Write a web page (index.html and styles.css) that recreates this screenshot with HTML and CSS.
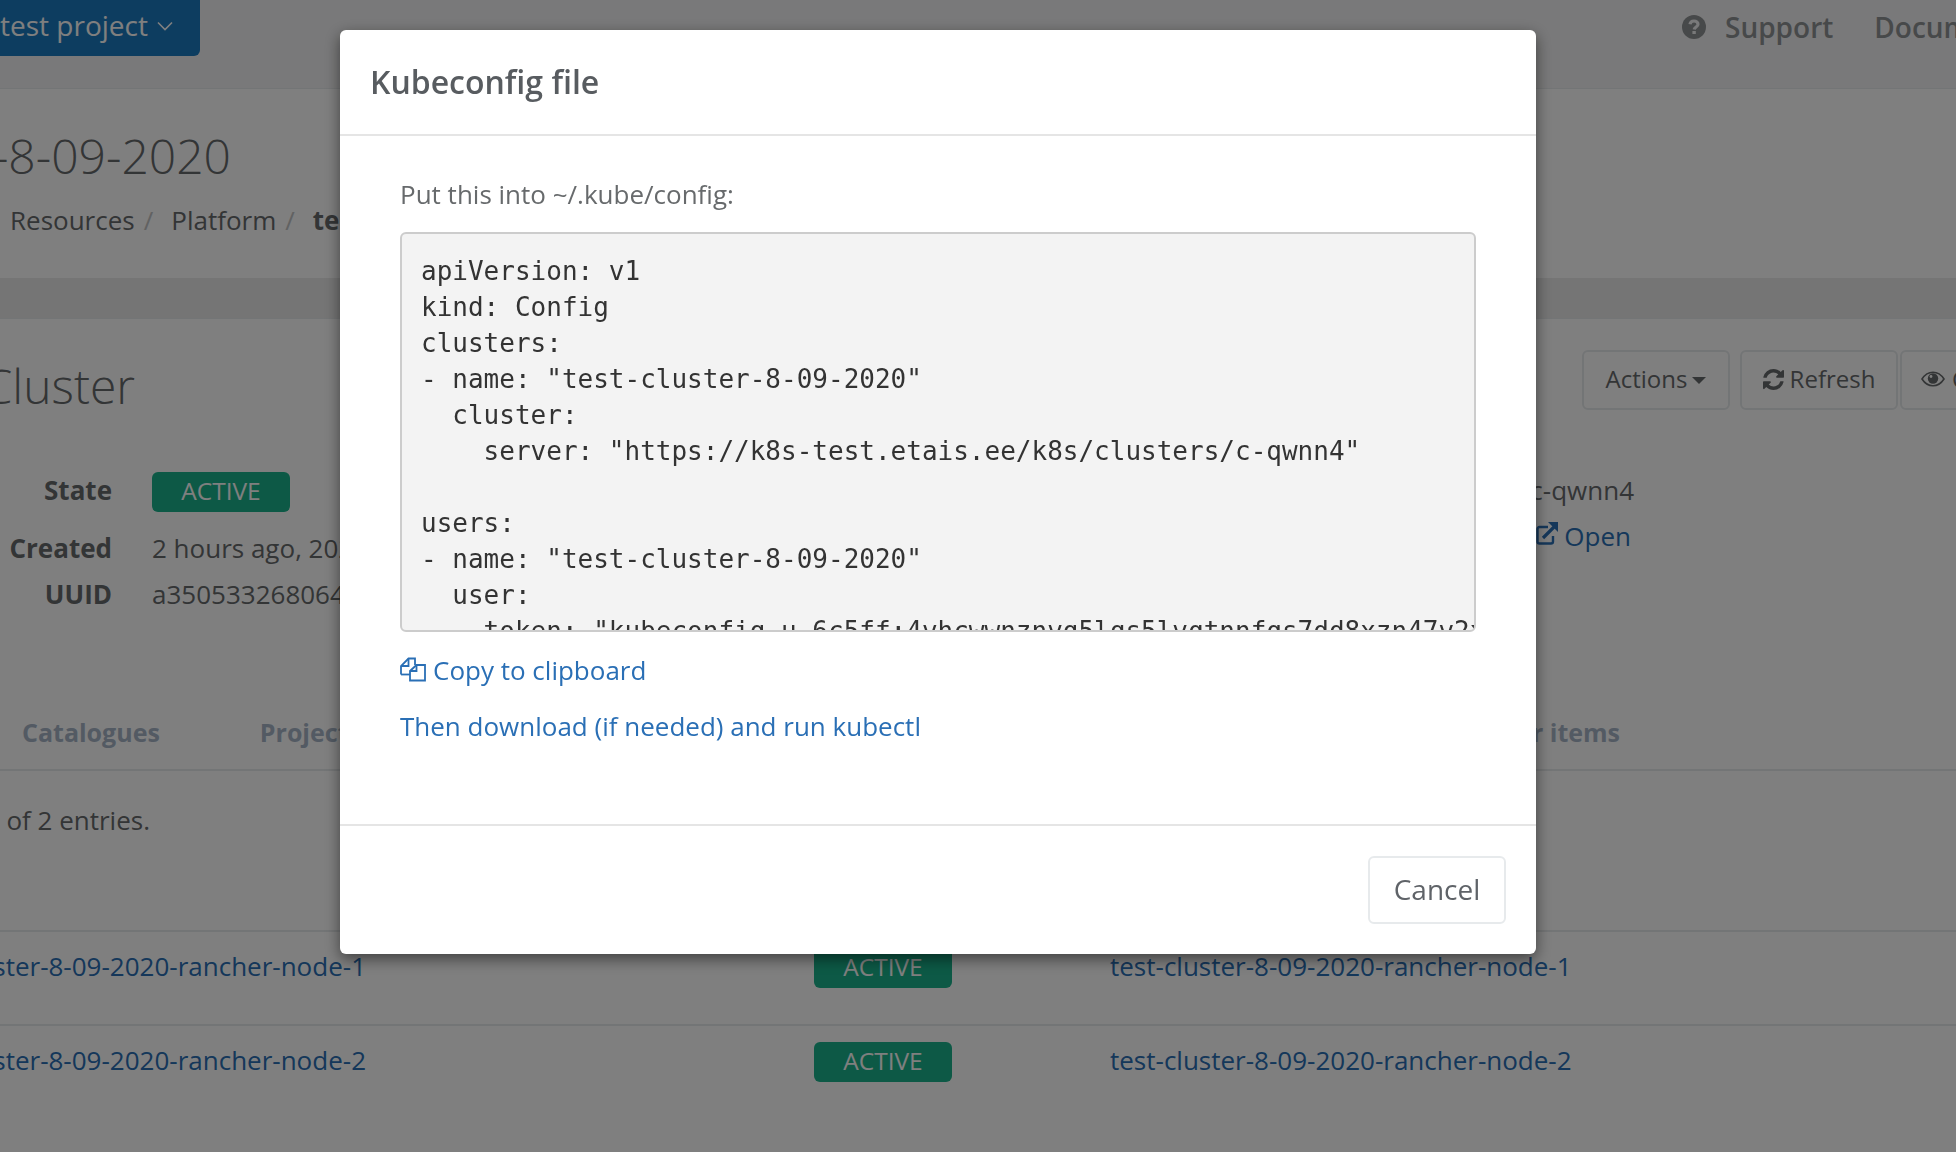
FILE: index.html
```html
<!DOCTYPE html>
<html lang="en">
<head>
<meta charset="utf-8">
<title>Kubeconfig file</title>
<link rel="stylesheet" href="styles.css">
</head>
<body>
<div class="page">
  <header class="topbar">
    <div class="project-btn"><span>test project</span>
      <svg class="chevron" viewBox="0 0 16 10"><path d="M1 1.500l7 7 7-7"/></svg>
    </div>
    <nav class="topnav">
      <svg class="help-icon" viewBox="0 0 24 24"><circle cx="12" cy="12" r="12"/><path class="help-mark" d="M8 9.300c.3-2.200 1.900-3.300 4-3.300 2.300 0 4 1.300 4 3.300 0 2.700-3.500 2.600-3.800 5.200"/><rect class="help-dot" x="10.400" y="16" width="3.400" height="3"/></svg>
      <a class="topnav-link">Support</a>
      <a class="topnav-link">Documentation</a>
    </nav>
  </header>
  <section class="title-panel">
    <h1 class="cut page-title"><span>test-cluster-8-09-2020</span></h1>
    <div class="cut crumbs-wrap">
      <ol class="crumbs">
        <li>Resources</li><li class="sep">/</li><li>Platform</li><li class="sep">/</li><li class="strong">test-cluster-8-09-2020</li>
      </ol>
    </div>
  </section>
  <div class="band"></div>
  <main class="card">
    <div class="card-head">
      <h2 class="cut card-title"><span>Cluster</span></h2>
      <div class="actions">
        <button class="btn btn-actions">Actions<i class="caret"></i></button>
        <button class="btn btn-refresh">
          <svg class="refresh-icon" viewBox="0 0 1536 1536"><path d="M1511 928q0 5-1 7-64 268-268 434.500t-478 166.500q-146 0-282.500-55t-243.500-157l-129 129q-19 19-45 19t-45-19-19-45v-448q0-26 19-45t45-19h448q26 0 45 19t19 45-19 45l-137 137q71 66 161 102t187 36q134 0 250-65t186-179q11-17 53-117 8-23 30-23h192q13 0 22.500 9.500t9.500 22.500zm25-800v448q0 26-19 45t-45 19h-448q-26 0-45-19t-19-45 19-45l138-138q-148-137-349-137-134 0-250 65t-186 179q-11 17-53 117-8 23-30 23h-199q-13 0-22.500-9.500t-9.500-22.500v-7q65-268 270-434.500t480-166.500q146 0 284 55.500t245 156.500l130-129q19-19 45-19t45 19 19 45z"/></svg>Refresh</button>
        <button class="btn btn-open">
          <svg class="eye-icon" viewBox="0 0 24 16"><path class="eye-line" d="M1 8c2.800-4.400 6.500-6.800 11-6.800S20.200 3.600 23 8c-2.800 4.400-6.500 6.800-11 6.800S3.800 12.400 1 8z"/><circle cx="12" cy="7.500" r="5.200"/><circle class="eye-glint" cx="10" cy="5.500" r="1.400"/></svg>Console</button>
      </div>
    </div>
    <div class="details">
      <dl class="facts">
        <dt>State</dt><dd><span class="badge">ACTIVE</span></dd>
        <dt>Created</dt><dd>2 hours ago, 2020-09-08 11:23</dd>
        <dt>UUID</dt><dd>a350533268064b72a2d1c9fe</dd>
      </dl>
      <div class="facts-right">
        <div>c-qwnn4</div>
        <a class="open-link">
          <svg class="ext-icon" viewBox="0 0 22 24"><path d="M12 6H3.500A2 2 0 0 0 1.500 8v12.500a2 2 0 0 0 2 2H15a2 2 0 0 0 2-2V15"/><path class="ext-shaft" d="M7 17L18 6"/><path class="ext-head" d="M12 1h10v10z"/></svg>Open</a>
      </div>
    </div>
    <div class="tabs">
      <span class="tab">Catalogues</span>
      <span class="tab">Projects</span>
      <span class="tab tab-end">Order items</span>
    </div>
    <div class="cut entries"><span>Showing 1 to 2 of 2 entries.</span></div>
    <div class="table">
      <div class="table-row">
        <div class="cut node-name"><a>test-cluster-8-09-2020-rancher-node-1</a></div>
        <span class="badge badge-cell">ACTIVE</span>
        <a class="node-link">test-cluster-8-09-2020-rancher-node-1</a>
      </div>
      <div class="table-row">
        <div class="cut node-name"><a>test-cluster-8-09-2020-rancher-node-2</a></div>
        <span class="badge badge-cell">ACTIVE</span>
        <a class="node-link">test-cluster-8-09-2020-rancher-node-2</a>
      </div>
    </div>
  </main>
</div>
<div class="overlay"></div>
<div class="modal">
  <div class="modal-head"><h3>Kubeconfig file</h3></div>
  <div class="modal-body">
    <p class="hint">Put this into ~/.kube/config:</p>
    <pre class="code">apiVersion: v1
kind: Config
clusters:
- name: "test-cluster-8-09-2020"
  cluster:
    server: "https://k8s-test.etais.ee/k8s/clusters/c-qwnn4"

users:
- name: "test-cluster-8-09-2020"
  user:
    token: "kubeconfig-u-6c5ff:4vhcwwnznvg5lqs5lvqtnnfqs7dd8xzn47v2x8kq"</pre>
    <a class="copy-link">
      <svg class="copy-icon" viewBox="0 0 26 24"><path d="M1 17V8.500L8.500 1H15v6.500"/><path d="M1 17h9"/><path d="M8.500 1v7.500H1"/><path d="M16.500 7.500H25V23H10V13.500z"/><path d="M16.500 7.500v6H10"/></svg>Copy to clipboard</a>
    <a class="download-link">Then download (if needed) and run kubectl</a>
  </div>
  <div class="modal-foot"><button class="btn-cancel">Cancel</button></div>
</div>
</body>
</html>
```

FILE: styles.css
```css
* { box-sizing: border-box; }
html, body { margin: 0; padding: 0; width: 1956px; height: 1152px; overflow: hidden; }
body { font-family: "Open Sans", "Noto Sans", sans-serif; font-size: 26px; line-height: 36px; color: #676a6c; background: #fff; }
h1, h2, h3, p, dl, dd, ol { margin: 0; padding: 0; font-weight: normal; }
a { color: #2a6fb5; text-decoration: none; }

.page { width: 1956px; height: 1152px; overflow: hidden; display: flex; flex-direction: column; }
.cut { display: flex; justify-content: flex-end; white-space: nowrap; flex: none; }

.topbar { height: 89px; flex: none; background: #f3f3f4; border-bottom: 1px solid #e7eaec; display: flex; justify-content: space-between; align-items: flex-start; }
.project-btn { width: 200px; height: 56px; background: #1b7ac0; color: #fff; border-radius: 0 0 6px 0; font-size: 28px; display: flex; align-items: center; gap: 9px; padding-bottom: 6px; white-space: nowrap; }
.chevron { width: 16px; height: 10px; fill: none; stroke: #fff; stroke-width: 1.600; margin-top: 2px; }
.topnav { width: 274px; display: flex; align-items: center; height: 55px; padding-bottom: 1px; font-size: 28px; font-weight: 600; white-space: nowrap; flex: none; overflow: hidden; }
.help-icon { width: 24px; height: 24px; fill: #8f9294; flex: none; }
.help-mark { fill: none; stroke: #f3f3f4; stroke-width: 3.200; }
.help-dot { fill: #f3f3f4; }
.topnav-link { color: #8f9294; margin-left: 19px; }
.topnav-link + .topnav-link { margin-left: 41px; }

.title-panel { height: 189px; flex: none; background: #fff; padding-top: 40px; }
.page-title { width: 231px; font-size: 48px; font-weight: 300; line-height: 54px; }
.crumbs-wrap { width: 1956px; justify-content: flex-start; margin-top: 19px; }
.crumbs { list-style: none; display: flex; margin-left: 10px; }
.crumbs .sep { color: #c3c4c5; margin: 0 18px 0 9px; }
.crumbs .strong { font-weight: 700; }

.band { height: 41px; flex: none; background: #ebebeb; border-bottom: 1px solid #e7eaec; }

.card { flex: 1; background: #fff; padding-top: 31px; min-height: 0; }
.card-head { display: flex; height: 59px; }
.card-title { width: 135px; font-size: 48px; font-weight: 300; line-height: 54px; margin-top: 9px; height: 54px; }
.actions { display: flex; margin-left: 1447px; flex: none; }
.btn { font: inherit; font-size: 24px; color: #676a6c; background: #fff; border: 2px solid #e7eaec; border-radius: 6px; height: 60px; padding: 0 0 2px; display: flex; align-items: center; justify-content: center; white-space: nowrap; }
.btn-actions { width: 148px; margin-right: 10px; }
.btn-refresh { width: 158px; margin-right: 2px; gap: 6px; }
.btn-open { width: 200px; justify-content: flex-start; padding-left: 19px; gap: 7px; }
.caret { width: 0; height: 0; border: 7px solid transparent; border-top: 7px solid #676a6c; border-bottom: 0; margin-left: 5px; margin-top: 3px; }
.refresh-icon { width: 21px; height: 21px; fill: #676a6c; }
.eye-icon { width: 24px; height: 16px; fill: #676a6c; }
.eye-line { fill: none; stroke: #676a6c; stroke-width: 1.600; }
.eye-glint { fill: #fff; }

.details { display: flex; justify-content: space-between; width: 1634px; margin-top: 63px; }
.facts { display: grid; grid-template-columns: 112px 1200px; column-gap: 40px; grid-template-rows: 48px 36px 36px; row-gap: 10px; white-space: nowrap; }
.facts dt { font-weight: 700; text-align: right; display: flex; justify-content: flex-end; }
.facts-right { display: flex; flex-direction: column; align-items: flex-end; gap: 10px; }
.open-link { display: flex; align-items: center; gap: 6px; margin-right: 3px; }
.ext-icon { width: 22px; height: 24px; fill: none; stroke: #2a6fb5; stroke-width: 2.400; margin-top: -6px; }
.ext-shaft { stroke-width: 3.200; }
.ext-head { fill: #2a6fb5; stroke: none; }
.badge { display: inline-flex; align-items: center; justify-content: center; width: 138px; height: 40px; padding-bottom: 2px; background: #1ab38c; color: #fff; border-radius: 6px; font-size: 24.500px; line-height: 38px; }

.tabs { display: flex; width: 1956px; height: 57px; margin-top: 102px; padding-left: 22px; border-bottom: 2px solid #e7eaec; font-size: 25px; font-weight: 700; color: #a7b5c7; white-space: nowrap; }
.tab + .tab { margin-left: 100px; }
.tab-end { margin-left: auto !important; margin-right: 336px; }

.entries { width: 150px; margin-top: 31px; }

.table { margin-top: 92px; border-top: 2px solid #e7eaec; }
.table-row { height: 94px; display: flex; align-items: flex-start; padding-top: 16px; border-bottom: 2px solid #e7eaec; }
.table-row:last-child { border-bottom: 0; }
.node-name { width: 366px; }
.badge-cell { margin-left: 448px; flex: none; }
.node-link { margin-left: 158px; white-space: nowrap; }

.overlay { position: fixed; inset: 0; background: rgba(0, 0, 0, 0.5); }

.modal { position: fixed; left: 340px; top: 30px; width: 1196px; height: 924px; background: #fff; border-radius: 6px; box-shadow: 0 5px 15px rgba(0, 0, 0, 0.5); display: flex; flex-direction: column; }
.modal-head { height: 106px; flex: none; border-bottom: 2px solid #e5e5e5; padding: 30px 30px 0; }
.modal-head h3 { font-size: 32px; line-height: 44px; font-weight: 600; color: #585c60; }
.modal-body { flex: 1; padding: 40px 60px 0; display: flex; flex-direction: column; align-items: flex-start; }
.hint { line-height: 36px; color: #676a6c; }
.code { width: 1076px; height: 400px; margin: 20px 0 0; padding: 19px; overflow: hidden; background: #f3f3f3; border: 2px solid #ccc; border-radius: 6px; font-family: "DejaVu Sans Mono", "Liberation Mono", monospace; font-size: 26px; line-height: 36px; color: #333; white-space: pre; }
.copy-link { display: flex; align-items: center; gap: 7px; margin-top: 20px; }
.copy-icon { width: 26px; height: 25px; fill: none; stroke: #2a6fb5; stroke-width: 1.800; margin-top: -1px; }
.download-link { margin-top: 20px; }
.modal-foot { height: 130px; flex: none; border-top: 2px solid #e5e5e5; display: flex; justify-content: flex-end; align-items: flex-start; padding: 30px 30px 0 0; }
.btn-cancel { font: inherit; font-size: 28px; color: #5f6368; background: #fff; border: 2px solid #e7eaec; border-radius: 6px; width: 138px; height: 68px; padding: 0 0 2px; }
```
